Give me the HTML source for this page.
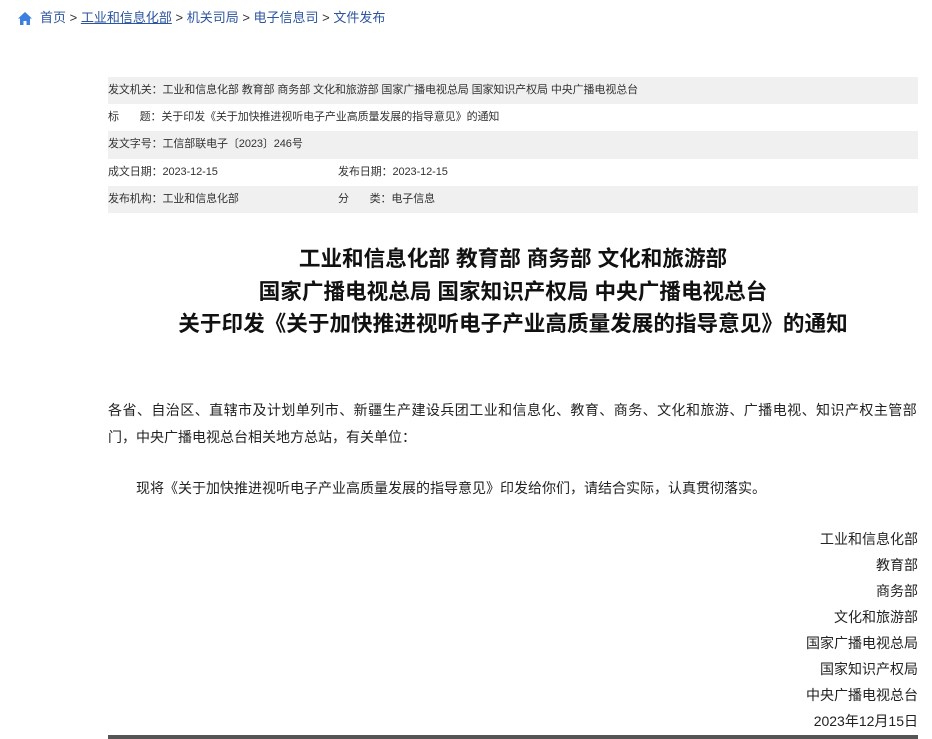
<!DOCTYPE html>
<html><head><meta charset="utf-8"><style>
body{margin:0;background:#fff;font-family:"Liberation Sans","Noto Sans CJK SC",sans-serif;color:#333;width:932px;height:739px;overflow:hidden;position:relative}
.bc{position:absolute;left:18px;top:9px;font-size:13px;color:#333;line-height:18px}
.bc a{color:#2c55a0;text-decoration:none}
.bc svg{vertical-align:-3px;margin-right:8px}
.tbl{position:absolute;left:108px;top:77px;width:810px;font-size:11px;letter-spacing:-0.1px}
.r{height:27.2px;line-height:27.2px;padding-left:0;position:relative}
.g{background:#f0f0f0}
.c2{position:absolute;left:230px;top:0}
h1{position:absolute;left:108px;width:810px;top:243px;margin:0;text-align:center;font-size:21.6px;line-height:32.5px;font-weight:bold;color:#111}
.p{position:absolute;left:108px;font-size:14px;line-height:27px;color:#222}
.sig{position:absolute;right:14px;top:526px;text-align:right;font-size:14px;line-height:26px;color:#222}
.bar{position:absolute;left:108px;top:735px;width:810px;height:4px;background:#555}
</style></head><body>
<div class="bc"><svg width="14" height="13" viewBox="0 0 14 13"><path d="M7 0L0 6.5h2V13h3.5V9h3v4H12V6.5h2z" fill="#3d7fe0"/></svg><a>首页</a> &gt; <a style="text-decoration:underline">工业和信息化部</a> &gt; <a>机关司局</a> &gt; <a>电子信息司</a> &gt; <a>文件发布</a></div>
<div class="tbl">
<div class="r g">发文机关：工业和信息化部 教育部 商务部 文化和旅游部 国家广播电视总局 国家知识产权局 中央广播电视总台</div>
<div class="r">标&nbsp;&nbsp;&nbsp;&nbsp;&nbsp;&nbsp;&nbsp;题：关于印发《关于加快推进视听电子产业高质量发展的指导意见》的通知</div>
<div class="r g">发文字号：工信部联电子〔2023〕246号</div>
<div class="r">成文日期：2023-12-15<span class="c2">发布日期：2023-12-15</span></div>
<div class="r g">发布机构：工业和信息化部<span class="c2">分&nbsp;&nbsp;&nbsp;&nbsp;&nbsp;&nbsp;&nbsp;类：电子信息</span></div>
</div>
<h1>工业和信息化部 教育部 商务部 文化和旅游部<br>国家广播电视总局 国家知识产权局 中央广播电视总台<br>关于印发《关于加快推进视听电子产业高质量发展的指导意见》的通知</h1>
<div class="p" style="top:397px;width:830px"><span style="letter-spacing:0.45px">各省、自治区、直辖市及计划单列市、新疆生产建设兵团工业和信息化、教育、商务、文化和旅游、广播电视、知识产权主管部</span><br>门，中央广播电视总台相关地方总站，有关单位：</div>
<div class="p" style="top:475px;width:812px;text-indent:28px">现将《关于加快推进视听电子产业高质量发展的指导意见》印发给你们，请结合实际，认真贯彻落实。</div>
<div class="sig">工业和信息化部<br>教育部<br>商务部<br>文化和旅游部<br>国家广播电视总局<br>国家知识产权局<br>中央广播电视总台<br>2023年12月15日</div>
<div class="bar"></div>
</body></html>
